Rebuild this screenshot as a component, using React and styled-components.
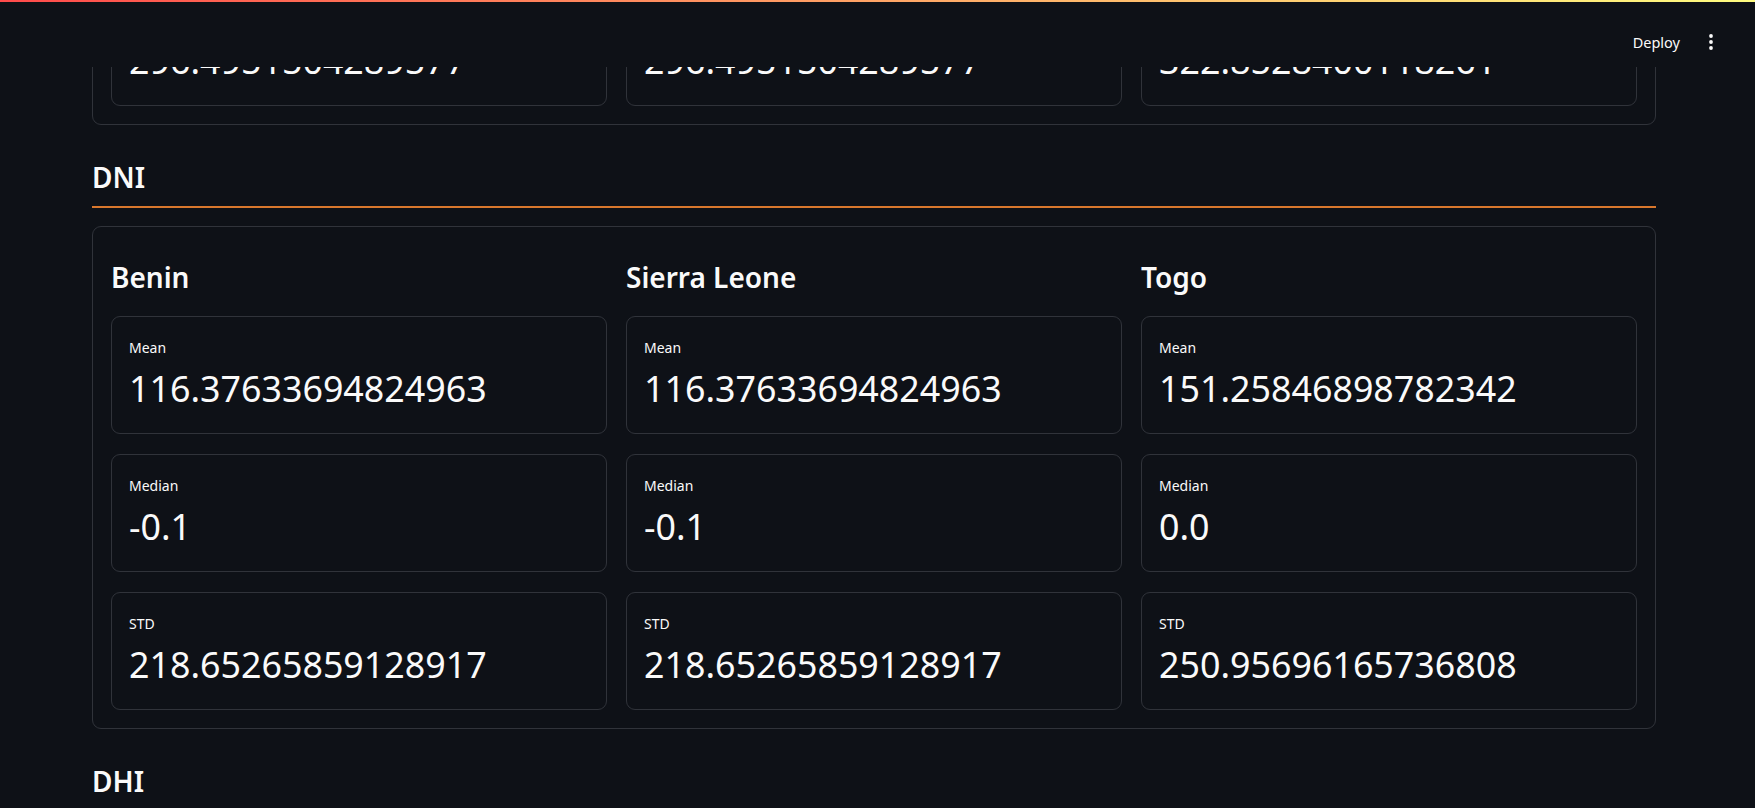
import React, { useLayoutEffect, useRef } from "react";
import styled, { createGlobalStyle } from "styled-components";

const GlobalStyle = createGlobalStyle`
  html, body {
    margin: 0;
    padding: 0;
    height: 100%;
    overflow: hidden;
    background: #0e1117;
  }
  body {
    font-family: "Noto Sans", "Open Sans", sans-serif;
    color: #fafafa;
  }
  * {
    box-sizing: border-box;
  }
`;

const Header = styled.header`
  position: fixed;
  top: 0;
  left: 0;
  right: 0;
  height: 67px;
  background: #0e1117;
  z-index: 10;
  display: flex;
  justify-content: flex-end;
  align-items: flex-start;
  gap: 2px;
  padding: 25px 27px 0 0;
`;

const Decoration = styled.div`
  position: absolute;
  top: 0;
  left: 0;
  right: 0;
  height: 2px;
  background: linear-gradient(90deg, rgb(255, 75, 75), rgb(255, 253, 128));
`;

const DeployBtn = styled.button`
  height: 34px;
  padding: 0 12px;
  border: none;
  background: transparent;
  color: #fafafa;
  font-family: inherit;
  font-size: 14.5px;
  cursor: pointer;
`;

const MenuBtn = styled.button`
  width: 34px;
  height: 34px;
  border: none;
  background: transparent;
  color: #fafafa;
  display: flex;
  align-items: center;
  justify-content: center;
  padding: 0;
`;

const Main = styled.main`
  height: 100vh;
  overflow-y: auto;
  scrollbar-width: none;
  &::-webkit-scrollbar {
    display: none;
  }
`;

const Block = styled.div`
  display: flex;
  flex-direction: column;
  gap: 34px;
  padding: 100px 99px 300px 92px;
`;

const Section = styled.section`
  display: flex;
  flex-direction: column;
`;

const SectionTitle = styled.h3`
  margin: 0;
  font-size: 28px;
  font-weight: 600;
  line-height: 36px;
`;

const Divider = styled.hr`
  margin: 11px 0 0;
  border: none;
  height: 2px;
  background: #d8772d;
`;

const Card = styled.div`
  margin-top: 18px;
  border: 1px solid #30333a;
  border-radius: 9px;
  padding: 18px;
  display: grid;
  grid-template-columns: repeat(3, 1fr);
  gap: 19px;
`;

const Column = styled.div`
  display: flex;
  flex-direction: column;
  min-width: 0;
`;

const Country = styled.h3`
  margin: 0 0 21px;
  padding-top: 14px;
  font-size: 28px;
  font-weight: 600;
  line-height: 36px;
`;

const MetricList = styled.div`
  display: flex;
  flex-direction: column;
  gap: 20px;
`;

const Metric = styled.div`
  border: 1px solid #30333a;
  border-radius: 9px;
  padding: 21px 17px 23px;
  display: flex;
  flex-direction: column;
`;

const Label = styled.div`
  font-size: 14px;
  line-height: 20px;
`;

const Value = styled.div`
  margin-top: 8px;
  font-size: 35.8px;
  line-height: 44px;
  white-space: nowrap;
`;

const sections = [
  {
    title: "GHI",
    rows: [
      { country: "Benin", mean: "240.55941571155967", median: "1.8", std: "296.4951504289577" },
      { country: "Sierra Leone", mean: "240.55941571155967", median: "1.8", std: "296.4951504289577" },
      { country: "Togo", mean: "230.55504022753557", median: "2.1", std: "322.8528400118261" },
    ],
  },
  {
    title: "DNI",
    rows: [
      { country: "Benin", mean: "116.37633694824963", median: "-0.1", std: "218.65265859128917" },
      { country: "Sierra Leone", mean: "116.37633694824963", median: "-0.1", std: "218.65265859128917" },
      { country: "Togo", mean: "151.25846898782342", median: "0.0", std: "250.95696165736808" },
    ],
  },
  {
    title: "DHI",
    rows: [
      { country: "Benin", mean: "113.72049477305768", median: "1.6", std: "158.94603221358604" },
      { country: "Sierra Leone", mean: "113.72049477305768", median: "1.6", std: "158.94603221358604" },
      { country: "Togo", mean: "116.44456065587286", median: "2.5", std: "156.52071464958834" },
    ],
  },
];

function MoreIcon() {
  return (
    <svg width="4" height="16" viewBox="0 0 4 16" fill="currentColor">
      <circle cx="2" cy="2" r="1.9" />
      <circle cx="2" cy="8" r="1.9" />
      <circle cx="2" cy="14" r="1.9" />
    </svg>
  );
}

export default function App() {
  const mainRef = useRef(null);
  const dniRef = useRef(null);

  // keep the page scrolled so the DNI block sits where the screenshot has it
  useLayoutEffect(() => {
    const m = mainRef.current;
    const d = dniRef.current;
    m.scrollTop = d.getBoundingClientRect().top - m.getBoundingClientRect().top - 159;
  }, []);

  return (
    <>
      <GlobalStyle />
      <Header>
        <Decoration />
        <DeployBtn>Deploy</DeployBtn>
        <MenuBtn>
          <MoreIcon />
        </MenuBtn>
      </Header>
      <Main ref={mainRef}>
        <Block>
          {sections.map(section => (
            <Section key={section.title} ref={section.title === "DNI" ? dniRef : null}>
              <SectionTitle>{section.title}</SectionTitle>
              <Divider />
              <Card>
                {section.rows.map(row => (
                  <Column key={row.country}>
                    <Country>{row.country}</Country>
                    <MetricList>
                      <Metric>
                        <Label>Mean</Label>
                        <Value>{row.mean}</Value>
                      </Metric>
                      <Metric>
                        <Label>Median</Label>
                        <Value>{row.median}</Value>
                      </Metric>
                      <Metric>
                        <Label>STD</Label>
                        <Value>{row.std}</Value>
                      </Metric>
                    </MetricList>
                  </Column>
                ))}
              </Card>
            </Section>
          ))}
        </Block>
      </Main>
    </>
  );
}
